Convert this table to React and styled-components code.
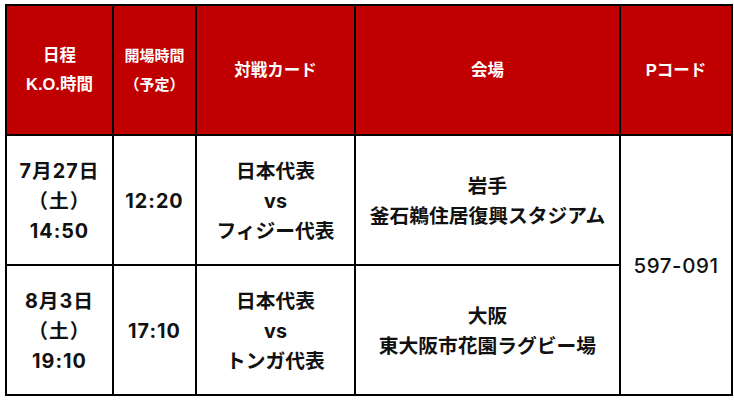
import React from "react";
import styled, { createGlobalStyle } from "styled-components";

const GlobalStyle = createGlobalStyle`
  html, body {
    margin: 0;
    padding: 0;
    background: #fff;
  }
  body {
    font-family: "Liberation Sans", "Noto Sans CJK JP", sans-serif;
  }
`;

const Page = styled.div`
  padding: 4px 3px 0 5px;
`;

const Table = styled.table`
  width: 726px;
  height: 390px;
  border-collapse: collapse;
  table-layout: fixed;
  border: 2px solid #333;
`;

const HeadCell = styled.th`
  background: #c00000;
  color: #fff;
  font-weight: 700;
  font-size: ${(p) => (p.$small ? "15px" : "16.5px")};
  line-height: 29px;
  border: 2px solid #000;
  text-align: center;
  vertical-align: middle;
  padding: 0;
`;

const Cell = styled.td`
  color: #111;
  font-family: Inter, "Noto Sans CJK JP", sans-serif;
  font-weight: ${(p) => (p.$light ? 500 : 700)};
  font-size: ${(p) => (p.$light ? "20.5px" : "19.75px")};
  letter-spacing: ${(p) => (p.$spaced ? "1px" : p.$light ? "0.6px" : "0")};
  line-height: 30px;
  border: 2px solid #000;
  text-align: center;
  vertical-align: middle;
  padding: 2px 0 0;
  white-space: nowrap;
`;

const Row = styled.tr`
  height: 130px;
`;

const Lines = ({ lines }) =>
  lines.map((l, i) => (
    <React.Fragment key={i}>
      {i > 0 && <br />}
      {l}
    </React.Fragment>
  ));

const matches = [
  {
    date: ["7月27日", "（土）", "14:50"],
    open: "12:20",
    card: ["日本代表", "vs", "フィジー代表"],
    venue: ["岩手", "釜石鵜住居復興スタジアム"],
  },
  {
    date: ["8月3日", "（土）", "19:10"],
    open: "17:10",
    card: ["日本代表", "vs", "トンガ代表"],
    venue: ["大阪", "東大阪市花園ラグビー場"],
  },
];

export default function App() {
  return (
    <>
      <GlobalStyle />
      <Page>
        <Table>
          <colgroup>
            <col style={{ width: 107 }} />
            <col style={{ width: 83 }} />
            <col style={{ width: 159 }} />
            <col style={{ width: 265 }} />
            <col style={{ width: 112 }} />
          </colgroup>
          <thead>
            <Row>
              <HeadCell>
                日程
                <br />
                K.O.時間
              </HeadCell>
              <HeadCell $small>
                開場時間
                <br />
                （予定）
              </HeadCell>
              <HeadCell>対戦カード</HeadCell>
              <HeadCell>会場</HeadCell>
              <HeadCell>Pコード</HeadCell>
            </Row>
          </thead>
          <tbody>
            {matches.map((m, i) => (
              <Row key={i}>
                <Cell $spaced>
                  <Lines lines={m.date} />
                </Cell>
                <Cell $spaced>{m.open}</Cell>
                <Cell>
                  <Lines lines={m.card} />
                </Cell>
                <Cell>
                  <Lines lines={m.venue} />
                </Cell>
                {i === 0 && (
                  <Cell $light rowSpan={2}>
                    597-091
                  </Cell>
                )}
              </Row>
            ))}
          </tbody>
        </Table>
      </Page>
    </>
  );
}
